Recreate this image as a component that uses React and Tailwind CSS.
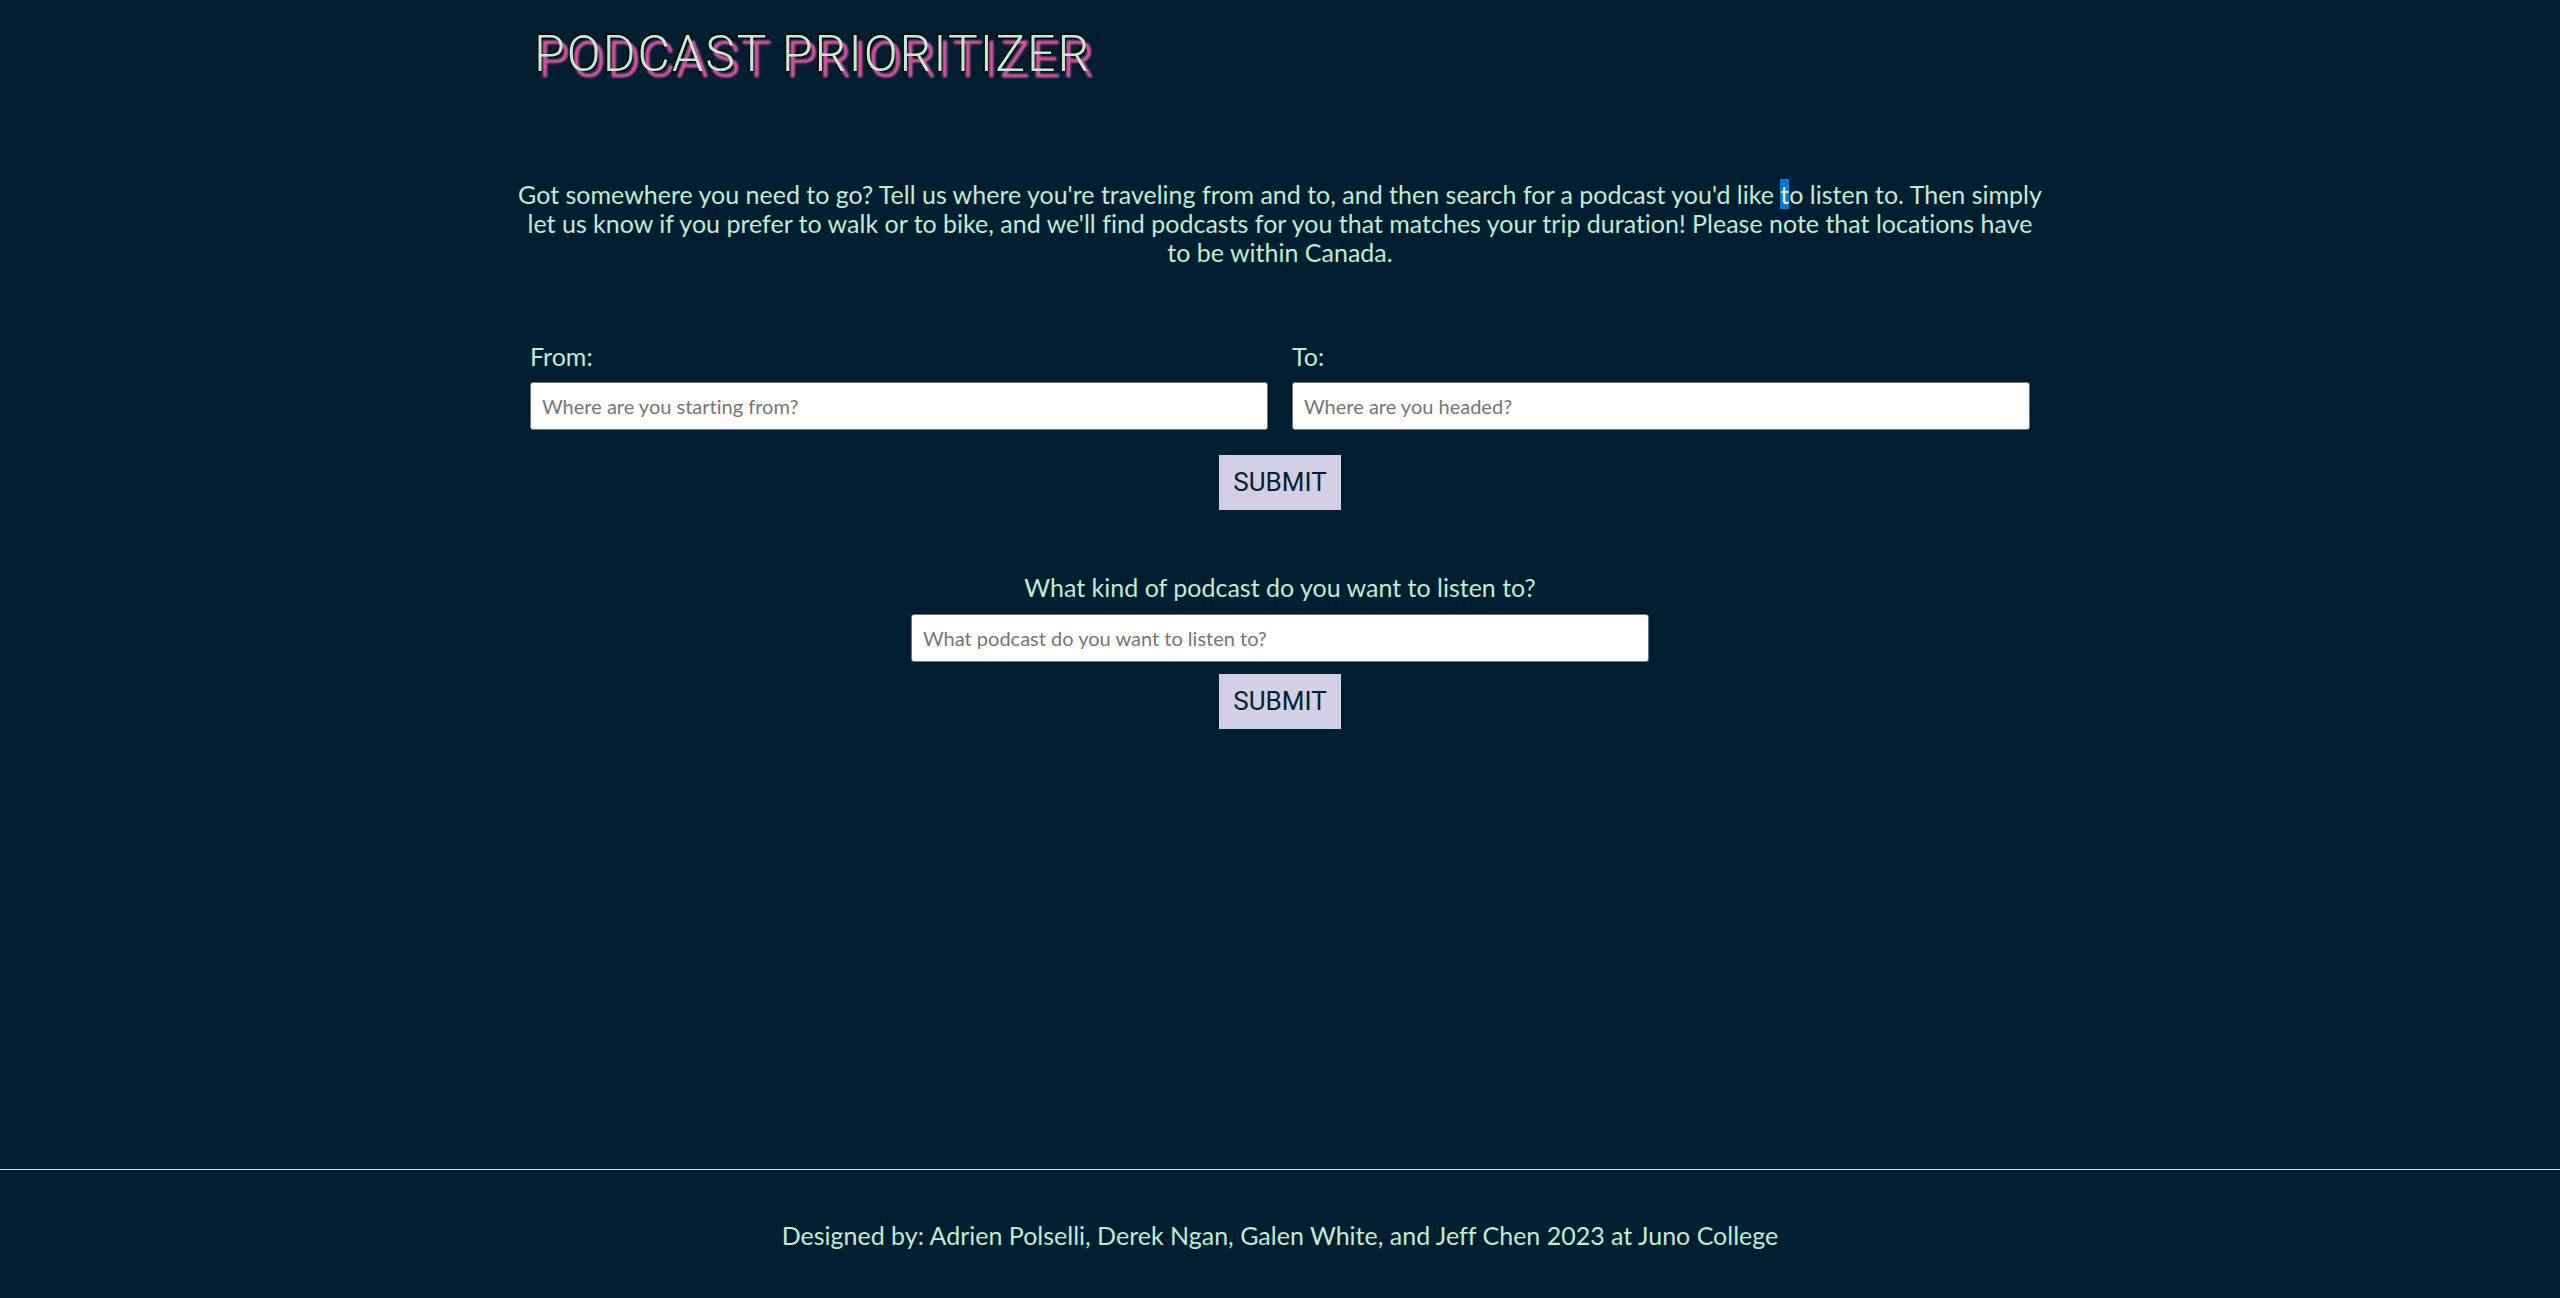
const field =
  'h-12 w-full rounded-[3px] border border-[#767676] bg-white px-[11px] text-[20px] text-black placeholder:text-[#757575]'
const submit =
  'h-[55px] w-[122px] bg-[#d3cfe6] font-["Roboto",sans-serif] text-[26px] text-[#001f33]'

export default function App() {
  return (
    <div className='flex min-h-screen flex-col bg-[#001e31] font-["Lato",sans-serif] text-[25px] leading-[29px] text-[#c1ecd4] [font-variant-ligatures:none]'>
      <main className="mx-auto w-full max-w-[1500px] grow">
        <h1 className='pt-6 pl-1 font-["Roboto",sans-serif] text-[50px] leading-[60px] font-light tracking-[2px] uppercase [-webkit-text-stroke:3px_#000] [paint-order:stroke_fill] [text-shadow:5px_6px_3px_#d4559f,5px_6px_2px_#d4559f]'>
          Podcast Prioritizer
        </h1>
        <p className="-mx-4 mt-[96px] text-center">
          Got somewhere you need to go? Tell us where you're traveling from and to, and then search for a podcast you'd like <mark className="bg-[#0078d7] text-white">t</mark>o listen to. Then simply let us know if you prefer to walk or to bike, and we'll find podcasts for you that matches your trip duration! Please note that locations have to be within Canada.
        </p>
        <form className="mt-[75px] flex flex-col items-center">
          <div className="grid w-full grid-cols-2 gap-6">
            <div>
              <label className="block" htmlFor="from">From:</label>
              <input id="from" className={field + ' mt-[11px]'} placeholder="Where are you starting from?" />
            </div>
            <div>
              <label className="block" htmlFor="to">To:</label>
              <input id="to" className={field + ' mt-[11px]'} placeholder="Where are you headed?" />
            </div>
          </div>
          <button type="button" className={submit + ' mt-[25px]'}>SUBMIT</button>
        </form>
        <form className="mx-auto mt-[63px] flex w-full max-w-[738px] flex-col items-center">
          <label htmlFor="podcast">What kind of podcast do you want to listen to?</label>
          <input id="podcast" className={field + ' mt-3'} placeholder="What podcast do you want to listen to?" />
          <button type="button" className={submit + ' mt-3'}>SUBMIT</button>
        </form>
      </main>
      <footer className="border-t border-[#c1ecd4] pt-[51px] pb-12 text-center">
        Designed by: Adrien Polselli, Derek Ngan, Galen White, and Jeff Chen 2023 at Juno College
      </footer>
    </div>
  )
}
